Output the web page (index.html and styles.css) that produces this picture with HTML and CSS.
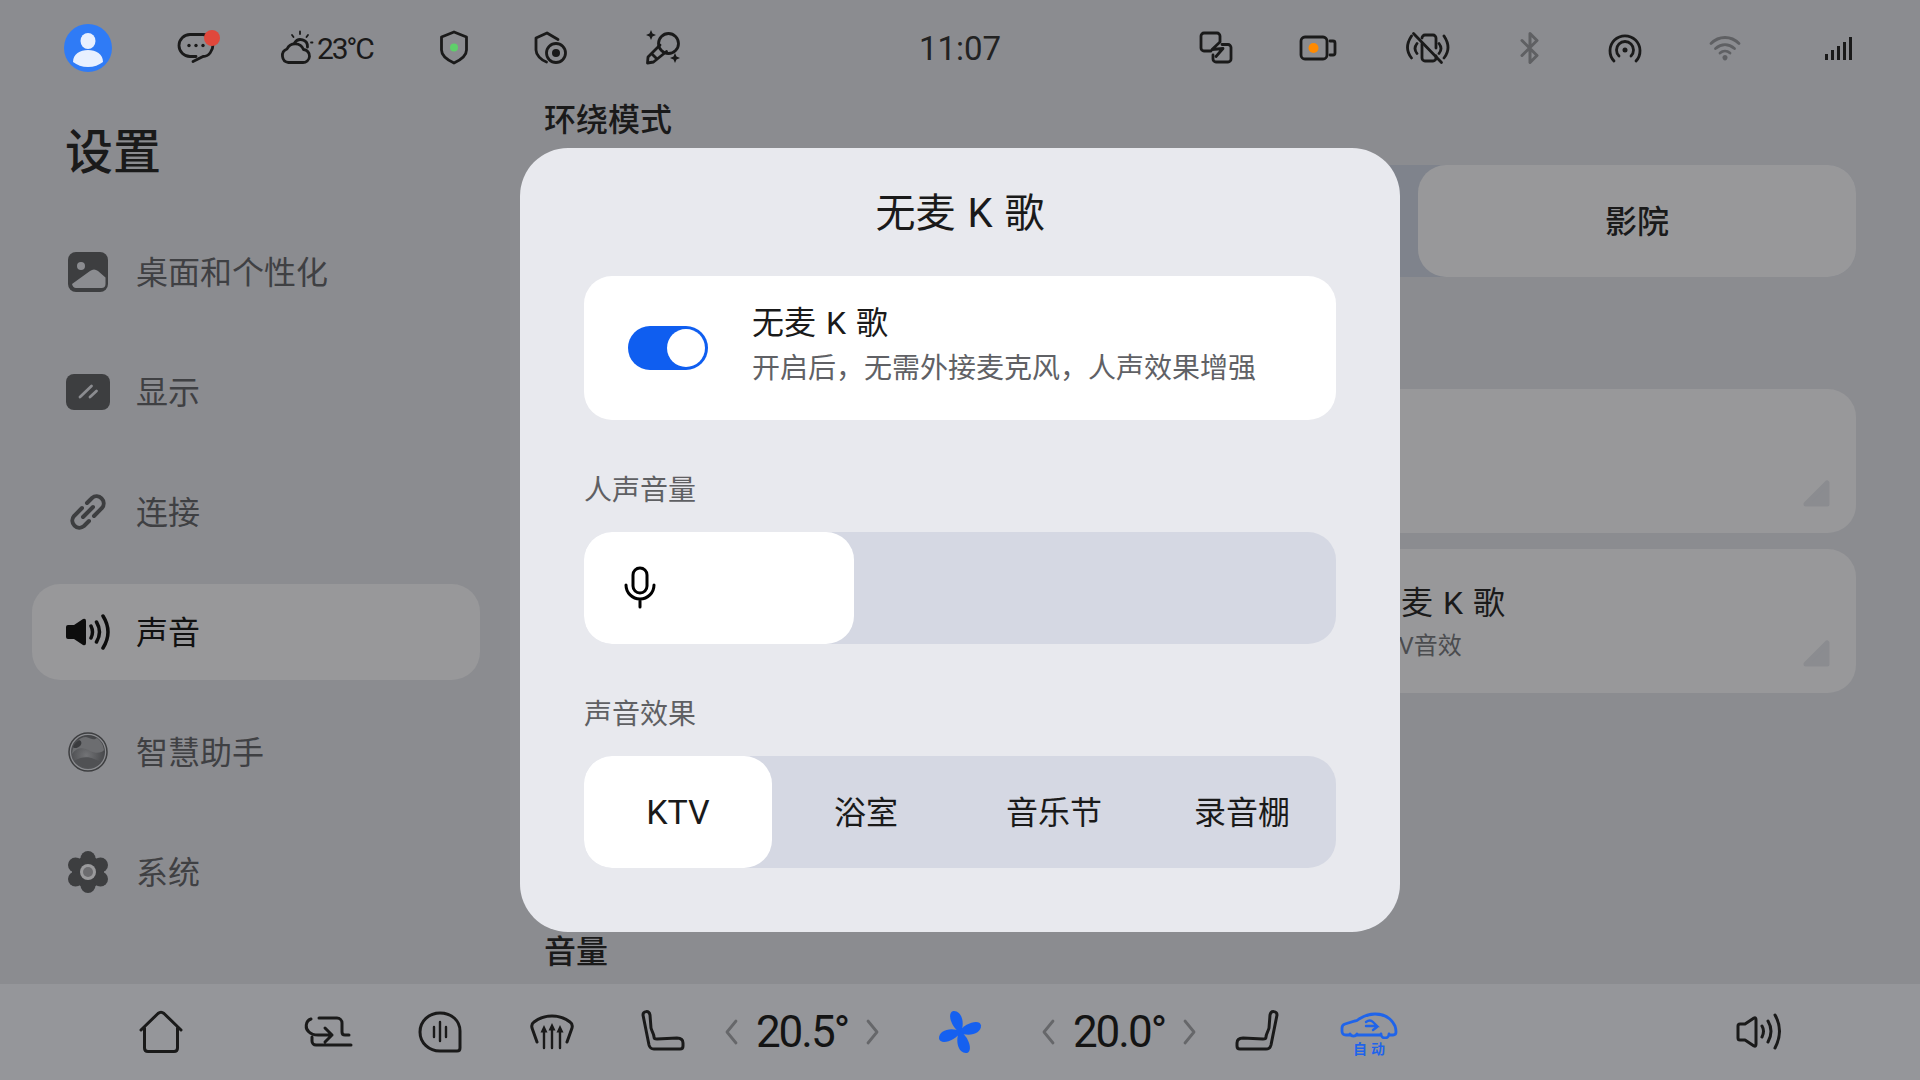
FILE: index.html
```html
<!DOCTYPE html>
<html lang="zh-CN">
<head>
  <meta charset="UTF-8" />
  <title>设置 - 声音</title>
  <link rel="stylesheet" href="styles.css">
</head>
<body>
<div class="screen">

  <!-- 状态栏 -->
  <header class="statusbar">
    <div class="status-left">
      <svg class="ico48" viewBox="0 0 48 48"><circle cx="24" cy="24" r="24" fill="#2f7bf6"/><ellipse cx="24" cy="17" rx="7.5" ry="8" fill="#e8f0ff"/><path d="M9 38c0-8 7-12 15-12s15 4 15 12c-4 3-9 5-15 5s-11-2-15-5z" fill="#e8f0ff"/></svg>
      <svg class="ico48 st-chat" viewBox="0 0 48 48"><g class="line" stroke-width="2.8"><path d="M24 32.5h-6a11 11 0 0 1 0-22h13a10 10 0 0 1 10 10c0 6-4 12-10 12l-10 5"/></g><circle cx="17" cy="21.500" r="1.700" fill="#1a1a1a"/><circle cx="24" cy="21.500" r="1.700" fill="#1a1a1a"/><circle cx="31" cy="21.500" r="1.700" fill="#1a1a1a"/><circle cx="40" cy="14" r="8" fill="#e0483c"/></svg>
      <div class="weather">
        <svg class="ico-weather" viewBox="0 0 40 48"><g class="line" stroke-width="2.8"><path d="M12.500 38.500h14a6.500 6.500 0 0 0 1-13A9 9 0 0 0 11 25a7 7 0 0 0 1.500 13.500z"/><path d="M18.500 19a7 7 0 0 1 13 4"/></g><g class="line" stroke-width="1.800"><path d="M16 11l1.500 2M24 7.500V10M32 11l-1.500 2M35 18.500h1.500"/></g></svg>
        <span>23°C</span>
      </div>
      <svg class="ico48 st-shield" viewBox="0 0 48 48"><path class="line" stroke-width="2.800" d="M24 8l12.500 5v13c0 6-6 10-12.500 13-6.500-3-12.500-7-12.500-13V13z"/><circle cx="24" cy="23.500" r="4" fill="#5fcf6a"/></svg>
      <svg class="ico48 st-shield2" viewBox="0 0 48 48"><path class="line" stroke-width="2.800" d="M31 15.500L20 9 9 14v12c0 5 5 10 10.500 12"/><circle class="line" stroke-width="2.800" cx="29" cy="29" r="9.500"/><circle cx="29" cy="29" r="4" fill="#1a1a1a"/></svg>
      <svg class="ico48 st-mic" viewBox="0 0 48 48"><g class="line" stroke-width="2.800"><circle cx="30.500" cy="19.500" r="10"/><path d="M22 21L10 33l-.5 6 6-1 13-10.500M14 30l4 4"/></g><path d="M13 6l1.500 3.500L18 11l-3.500 1.500L13 16l-1.500-3.500L8 11l3.500-1.500zM37 29l1.500 3.500L42 34l-3.500 1.500L37 39l-1.500-3.500L32 34l3.500-1.500z" fill="#1a1a1a"/></svg>
    </div>
    <div class="clock">11:07</div>
    <div class="status-right">
      <svg class="ico48" viewBox="0 0 48 48"><g class="line" stroke-width="2.800"><path d="M19 27h-7a3 3 0 0 1-3-3V12a3 3 0 0 1 3-3h13a3 3 0 0 1 3 3v5"/><path d="M30 20.500h6a3 3 0 0 1 3 3V35a3 3 0 0 1-3 3H24a3 3 0 0 1-3-3v-4"/><path d="M28 18l-8 7.500 11-1-7 8"/></g></svg>
      <svg class="ico48 st-cam" viewBox="0 0 48 48"><rect class="line" stroke-width="2.800" x="7" y="13" width="26" height="22" rx="4"/><circle cx="19.500" cy="24" r="5" fill="#ff8a00"/><path class="line" stroke-width="2.800" d="M36 17h3a2 2 0 0 1 2 2v10a2 2 0 0 1-2 2h-3"/></svg>
      <svg class="ico48 st-vib" viewBox="0 0 48 48"><g class="line" stroke-width="2.800"><path d="M18 14a3 3 0 0 1 3-3h8a3 3 0 0 1 3 3v10M32 32v2a3 3 0 0 1-3 3h-8a3 3 0 0 1-3-3V20"/><path d="M9.500 9.500l28 29"/><path d="M7.500 12q-8 12 0 22M13 19.500q-4 5 0 10M40 12q8 12 0 22M35 19.500q4 5 0 10"/></g></svg>
      <svg class="ico48 st-bt" viewBox="0 0 48 48"><path class="line grey" stroke-width="3" d="M16 16.500l15 15-7 7v-29l7 7-15 15"/></svg>
      <svg class="ico48 st-ap" viewBox="0 0 48 48"><g class="line" stroke-width="2.800"><path d="M13 37a15 15 0 1 1 22 0"/><path d="M18 32a8.500 8.500 0 1 1 12 0"/></g><circle cx="24" cy="26" r="2.500" fill="#1a1a1a"/></svg>
      <svg class="ico48 st-wifi" viewBox="0 0 48 48"><g class="line grey" stroke-width="2.800"><path d="M10 19.500c8-8 20-8 28 0M14.500 24.500c6-5 13-5 19 0M19 29c3-2.500 7-2.500 10 0"/></g><path d="M24 31c1.500 0 2.500 1 2.500 2.500S25.500 36.500 24 36.500 21.500 35 21.500 33.500 22.500 31 24 31z" fill="#5f6063"/></svg>
      <svg class="ico48 st-sig" viewBox="0 0 48 48"><g fill="#1a1a1a"><rect x="11" y="30" width="3" height="6"/><rect x="17" y="26" width="3" height="10"/><rect x="23" y="22" width="3" height="14"/><rect x="29" y="18" width="3" height="18"/><rect x="35" y="13" width="3" height="23"/></g></svg>
    </div>
  </header>

  <div class="main">
    <!-- 左侧菜单 -->
    <aside class="sidebar">
      <h1 class="page-title">设置</h1>
      <nav class="nav">
        <div class="nav-item">
          <svg class="ico48" viewBox="0 0 48 48"><rect x="4" y="4" width="40" height="40" rx="8" fill="#3d3e40"/><circle cx="17" cy="18" r="4" fill="#8b8c90"/><path d="M8 36l18-13q4-3 8 0l7.500 6.500V36q0 4-4 4H12q-3 0-4-4z" fill="#8b8c90"/></svg>
          <span>桌面和个性化</span>
        </div>
        <div class="nav-item">
          <svg class="ico48" viewBox="0 0 48 48"><rect x="2" y="6" width="44" height="36" rx="8" fill="#3d3e40"/><path d="M16 29l11.500-11M26 29l6.500-6" stroke="#8b8c90" stroke-width="2.800" stroke-linecap="round"/></svg>
          <span>显示</span>
        </div>
        <div class="nav-item">
          <svg class="ico48" viewBox="0 0 48 48"><path d="M23 15l5-5a7.100 7.100 0 0 1 10 10l-8 8M25 33l-5 5a7.100 7.100 0 0 1-10-10l8-8M19 29l10-10" fill="none" stroke="#3d3e40" stroke-width="4" stroke-linecap="round"/></svg>
          <span>连接</span>
        </div>
        <div class="nav-item active">
          <svg class="ico48" viewBox="0 0 48 48"><path d="M4 17h6l9-6q3-1 3 2v22q0 3-3 2l-9-6H4q-2 0-2-2V19q0-2 2-2z" fill="#0d0d0d"/><path d="M27 18q3 6 0 12M32.500 14q6 10 0 20M39 8q10 16 0 32" fill="none" stroke="#0d0d0d" stroke-width="3.500" stroke-linecap="round"/></svg>
          <span>声音</span>
        </div>
        <div class="nav-item">
          <svg class="ico48" viewBox="0 0 48 48"><defs><radialGradient id="orb" cx="45%" cy="60%" r="65%"><stop offset="0" stop-color="#737477"/><stop offset="1" stop-color="#3f4043"/></radialGradient></defs><circle cx="24" cy="24" r="19" fill="none" stroke="#3d3e40" stroke-width="1.500"/><circle cx="24" cy="24" r="17" fill="url(#orb)"/><path d="M8 26c6-8 12-6 18-3s12 2 14-1a17 17 0 0 0-7-12c-4 3-6 0-11-1C15 9 9 16 8 26z" fill="#6c6d70"/><path d="M10 33c6-4 14-5 20-2s7 3 8 1a17 17 0 0 1-28 1z" fill="#505154"/><path d="M15 12c3 1 3 4 1 6s-6 3-7 1c1-3 3-5 6-7z" fill="#3a3b3e"/></svg>
          <span>智慧助手</span>
        </div>
        <div class="nav-item">
          <svg class="ico48" viewBox="0 0 48 48"><g fill="#3d3e40"><circle cx="24" cy="24" r="16"/><circle cx="24" cy="10.500" r="7.500"/><circle cx="36.500" cy="17" r="7.500"/><circle cx="36.500" cy="31" r="7.500"/><circle cx="24" cy="37.500" r="7.500"/><circle cx="11.500" cy="31" r="7.500"/><circle cx="11.500" cy="17" r="7.500"/></g><circle cx="24" cy="24" r="8" fill="#9a9a9c"/><circle cx="24" cy="24" r="5" fill="#6c6c6f"/></svg>
          <span>系统</span>
        </div>
      </nav>
    </aside>

    <!-- 背后的声音页 -->
    <section class="content">
      <h2 class="section-label">环绕模式</h2>
      <div class="mode-track">
        <div class="mode-option">影院</div>
      </div>
      <div class="cards">
        <div class="fx-card">
          <svg class="corner" viewBox="0 0 27 27"><path d="M24 3v21H3z" fill="#8b8c90" stroke="#8b8c90" stroke-width="5" stroke-linejoin="round"/></svg>
        </div>
        <div class="fx-card">
          <div class="fx-title">无麦 K 歌</div>
          <div class="fx-sub">KTV音效</div>
          <svg class="corner" viewBox="0 0 27 27"><path d="M24 3v21H3z" fill="#8b8c90" stroke="#8b8c90" stroke-width="5" stroke-linejoin="round"/></svg>
        </div>
      </div>
      <h2 class="section-label volume-label">音量</h2>
    </section>
  </div>

  <!-- 底部栏 -->
  <footer class="dock">
    <svg class="ico56" viewBox="0 0 56 56"><path class="line" stroke-width="3" d="M8 26L25 9.500q3-2.500 6 0L48 26M11.500 24v20q0 3.500 3.500 3.500h26q3.500 0 3.500-3.500V24"/></svg>
    <svg class="ico56 d-recirc" viewBox="0 0 56 56"><path class="line" stroke-width="3" d="M19 14h18a5 5 0 0 1 5 5v9q0 3 3 3h4M12 33v4a4 4 0 0 0 4 4h35M11 15c-6 2-6 10-2 13q3 3 9 3h14M25 24l7 7-7 7"/></svg>
    <svg class="ico56 d-voice" viewBox="0 0 56 56"><path class="line" stroke-width="3" d="M28 9c12 0 20 8 20 18v17q0 3-3 3H28C17 47 8 39 8 28S17 9 28 9z"/><path class="line" stroke-width="2.400" d="M22 23v10M28 18v19M34 23v10"/></svg>
    <svg class="ico56 d-defrost" viewBox="0 0 56 56"><path class="line" stroke-width="3" d="M13 38L8 24q-1-4 2-6c10-8 26-8 36 0q3 2 2 6l-5 14"/><path class="line" stroke-width="2.400" d="M20 27v17M28 25v19M36 27v17"/><path d="M20 21l3.500 7.500h-7zM28 19l3.500 7.500h-7zM36 21l3.500 7.500h-7z" fill="#1a1a1a"/></svg>
    <svg class="ico56 d-seat" viewBox="0 0 56 56"><path class="line" stroke-width="3" d="M9 11c0-4 6-5 7 0l1 13c1 4 3 6 3 9q0 2 3 2l20-1q6 0 6 5v3q0 3-3 3H20q-4 0-5-4z"/></svg>
    <div class="temp d-temp1">
      <svg class="chev" viewBox="0 0 16 30"><path d="M13 4L4 15l9 11"/></svg>
      <span class="temp-val">20.5°</span>
      <svg class="chev" viewBox="0 0 16 30"><path d="M3 4l9 11-9 11"/></svg>
    </div>
    <svg class="ico56 d-fan" viewBox="0 0 56 56"><g fill="#1560f0"><path id="blade" d="M28.500 29C19 24 14.500 8 21.500 7c8-.5 12 12 7 22z"/><use href="#blade" transform="rotate(90 28 28)"/><use href="#blade" transform="rotate(180 28 28)"/><use href="#blade" transform="rotate(270 28 28)"/></g></svg>
    <div class="temp d-temp2">
      <svg class="chev" viewBox="0 0 16 30"><path d="M13 4L4 15l9 11"/></svg>
      <span class="temp-val">20.0°</span>
      <svg class="chev" viewBox="0 0 16 30"><path d="M3 4l9 11-9 11"/></svg>
    </div>
    <svg class="ico56 d-seat2" viewBox="0 0 56 56"><path class="line" stroke-width="3" d="M47 11c0-4-6-5-7 0l-1 13c-1 4-3 6-3 9q0 2-3 2l-20-1q-6 0-6 5v3q0 3 3 3h26q4 0 5-4z"/></svg>
    <div class="car">
      <svg class="car-ico" viewBox="0 0 58 27"><path d="M10 23H6q-4 0-4-4v-3q0-3 3-4l10-3q2 0 4-2C24 4 30 2 35 2c9 0 16 4 20 12q1 3 1 6 0 3-3 3h-4M17 23h24M10 22a4 4 0 0 0 7 0M41 22a4 4 0 0 0 8 0" fill="none" stroke="#1f64ea" stroke-width="2.800" stroke-linecap="round"/><path d="M26 10q4-3 7 0M26 14h11l-4-4M37 15l-4 3" fill="none" stroke="#1f64ea" stroke-width="2.400" stroke-linecap="round"/></svg>
      <span class="car-label">自动</span>
    </div>
    <svg class="ico56 d-vol" viewBox="0 0 56 56"><path class="line" stroke-width="3" d="M6 22q0-2 2-2h5l9-6q2-1 2 2v24q0 3-2 2l-9-6H8q-2 0-2-2z"/><path class="line" stroke-width="3" d="M30 22q3 5 0 11M36 17q6 10 0 21M43 11q9 16 0 33"/></svg>
  </footer>

  <!-- 无麦K歌弹窗 -->
  <div class="modal">
    <div class="modal-title">无麦 K 歌</div>
    <div class="switch-card">
      <div class="toggle"><i class="knob"></i></div>
      <div class="switch-text">
        <div class="switch-title">无麦 K 歌</div>
        <div class="switch-sub">开启后，无需外接麦克风，人声效果增强</div>
      </div>
    </div>
    <div class="field-label">人声音量</div>
    <div class="slider">
      <div class="slider-fill" style="width: 270px">
        <svg class="ico48" viewBox="0 0 48 48"><rect x="17" y="4" width="14" height="25" rx="7" fill="none" stroke="#000" stroke-width="3"/><path d="M10 21a14 14 0 0 0 28 0M24 35v8" fill="none" stroke="#000" stroke-width="3" stroke-linecap="round"/></svg>
      </div>
    </div>
    <div class="field-label">声音效果</div>
    <div class="tabs">
      <div class="tab selected">KTV</div>
      <div class="tab">浴室</div>
      <div class="tab">音乐节</div>
      <div class="tab">录音棚</div>
    </div>
  </div>

</div>
</body>
</html>
```

FILE: styles.css
```css
* {
  box-sizing: border-box;
}

body {
  margin: 0;
  font-family: Roboto, "Noto Sans CJK SC", sans-serif;
  background-color: #8b8c90;
  color: #1a1a1a;
}

.screen {
  position: relative;
  width: 1920px;
  height: 1080px;
  overflow: hidden;
  display: flex;
  flex-direction: column;
}

svg {
  display: block;
  flex: none;
}

.ico48 {
  width: 48px;
  height: 48px;
}

.ico56 {
  width: 56px;
  height: 56px;
}

.line {
  fill: none;
  stroke: #1a1a1a;
  stroke-linecap: round;
  stroke-linejoin: round;
}

.line.grey {
  stroke: #5f6063;
}

/* status bar */
.statusbar {
  height: 96px;
  display: grid;
  grid-template-columns: 1fr auto 1fr;
  align-items: center;
}

.status-left {
  display: flex;
  align-items: center;
  padding-left: 64px;
}

.status-right {
  display: flex;
  align-items: center;
  justify-content: flex-end;
  padding-right: 58px;
}

.st-chat { margin-left: 60px; }
.st-shield { margin-left: 57px; }
.st-shield2 { margin-left: 49px; }
.st-mic { margin-left: 63px; }
.st-cam { margin-left: 54px; }
.st-vib { margin-left: 62px; }
.st-bt { margin-left: 54px; }
.st-ap { margin-left: 47px; }
.st-wifi { margin-left: 52px; }
.st-sig { margin-left: 65px; }

.weather {
  display: flex;
  align-items: center;
  margin-left: 56px;
  font-size: 30px;
  letter-spacing: -2.2px;
}

.ico-weather {
  width: 40px;
  height: 48px;
  margin-right: 1px;
}

.clock {
  font-size: 33px;
  color: #222;
}

/* main */
.main {
  height: 888px;
  display: flex;
}

.sidebar {
  width: 520px;
  padding: 0 40px 0 32px;
}

.page-title {
  margin: 32px 0 46px 33px;
  font-size: 48px;
  line-height: 50px;
  font-weight: 500;
}

.nav {
  display: flex;
  flex-direction: column;
  gap: 24px;
}

.nav-item {
  height: 96px;
  display: flex;
  align-items: center;
  gap: 24px;
  padding-left: 32px;
  border-radius: 28px;
  font-size: 32px;
  color: #3f4043;
}

.nav-item span {
  margin-top: -4px;
}

.nav-item.active {
  background-color: #98989a;
  color: #111;
}

.content {
  flex: 1;
  display: flex;
  flex-direction: column;
  padding: 0 64px 0 24px;
}

.section-label {
  margin: 0;
  height: 48px;
  line-height: 48px;
  font-size: 32px;
  font-weight: 500;
  color: #1a1a1a;
}

.mode-track {
  margin-top: 21px;
  height: 112px;
  display: flex;
  justify-content: flex-end;
  background-color: #7f838c;
  border-radius: 28px;
}

.mode-option {
  width: 438px;
  display: flex;
  align-items: center;
  justify-content: center;
  padding-bottom: 4px;
  background-color: #98989a;
  border-radius: 28px;
  font-size: 32px;
  font-weight: 500;
}

.cards {
  margin-top: 112px;
  display: flex;
  flex-direction: column;
  align-items: flex-end;
  gap: 16px;
}

.fx-card {
  position: relative;
  width: 650px;
  height: 144px;
  padding: 29px 0 0 163px;
  background-color: #98989a;
  border-radius: 28px;
}

.fx-title {
  font-size: 32px;
  line-height: 50px;
  word-spacing: 2px;
}

.fx-sub {
  font-size: 24px;
  line-height: 36px;
  color: #4b4c4f;
}

/* the small resize mark in the corner of a card */
.corner {
  position: absolute;
  right: 26px;
  bottom: 26px;
  width: 27px;
  height: 27px;
}

.volume-label {
  margin-top: 235px;
}

/* bottom bar */
.dock {
  height: 96px;
  display: flex;
  align-items: center;
  padding-left: 133px;
  background-color: #95969a;
}

.d-recirc { margin-left: 111px; }
.d-voice { margin-left: 56px; }
.d-defrost { margin-left: 56px; }
.d-seat { margin-left: 54px; }
.d-temp1 { margin-left: 27px; }
.d-fan { margin-left: 45px; }
.d-temp2 { margin-left: 46px; }
.d-seat2 { margin-left: 26px; }
.d-vol { margin-left: 334px; }

.temp {
  width: 170px;
  display: flex;
  align-items: center;
  justify-content: space-between;
  padding: 0 6px;
}

.temp-val {
  font-size: 44px;
  letter-spacing: -2px;
  color: #141414;
}

.chev {
  width: 16px;
  height: 30px;
}

.chev path {
  fill: none;
  stroke: #66676a;
  stroke-width: 2.800;
  stroke-linecap: round;
  stroke-linejoin: round;
}

.car {
  width: 58px;
  margin: 4px 0 0 54px;
  display: flex;
  flex-direction: column;
  align-items: center;
}

.car-ico {
  width: 58px;
  height: 27px;
}

.car-label {
  font-size: 14px;
  line-height: 16px;
  font-weight: 700;
  letter-spacing: 4px;
  margin: 2px -4px 0 0;
  color: #1f64ea;
}

/* dialog */
.modal {
  position: absolute;
  left: 520px;
  top: 148px;
  width: 880px;
  height: 784px;
  padding: 0 64px;
  background-color: #e8e9ee;
  border-radius: 48px;
}

.modal-title {
  height: 128px;
  line-height: 132px;
  text-align: center;
  font-size: 40px;
  font-weight: 400;
  word-spacing: 2px;
}

.switch-card {
  height: 144px;
  display: flex;
  align-items: center;
  padding-left: 44px;
  background-color: #fff;
  border-radius: 28px;
}

.toggle {
  width: 80px;
  height: 44px;
  padding: 3px 3px;
  display: flex;
  justify-content: flex-end;
  background-color: #0f5ef0;
  border-radius: 22px;
}

.knob {
  width: 38px;
  height: 38px;
  background-color: #fff;
  border-radius: 50%;
}

.switch-text {
  margin: -3px 0 0 44px;
}

.switch-title {
  font-size: 32px;
  line-height: 44px;
  word-spacing: 2px;
}

.switch-sub {
  font-size: 28px;
  line-height: 47px;
  color: #606165;
}

.field-label {
  height: 112px;
  padding-top: 49px;
  font-size: 28px;
  line-height: 44px;
  color: #5f6063;
}

.slider {
  height: 112px;
  background-color: #d5d8e3;
  border-radius: 28px;
}

.slider-fill {
  height: 100%;
  display: flex;
  align-items: center;
  padding-left: 32px;
  background-color: #fff;
  border-radius: 28px;
}

.tabs {
  height: 112px;
  display: grid;
  grid-template-columns: repeat(4, 1fr);
  background-color: #d5d8e3;
  border-radius: 28px;
}

.tab {
  display: flex;
  align-items: center;
  justify-content: center;
  padding-bottom: 4px;
  font-size: 32px;
  border-radius: 28px;
}

.tab.selected {
  padding-bottom: 0;
  font-size: 34px;
  background-color: #fff;
}
```
